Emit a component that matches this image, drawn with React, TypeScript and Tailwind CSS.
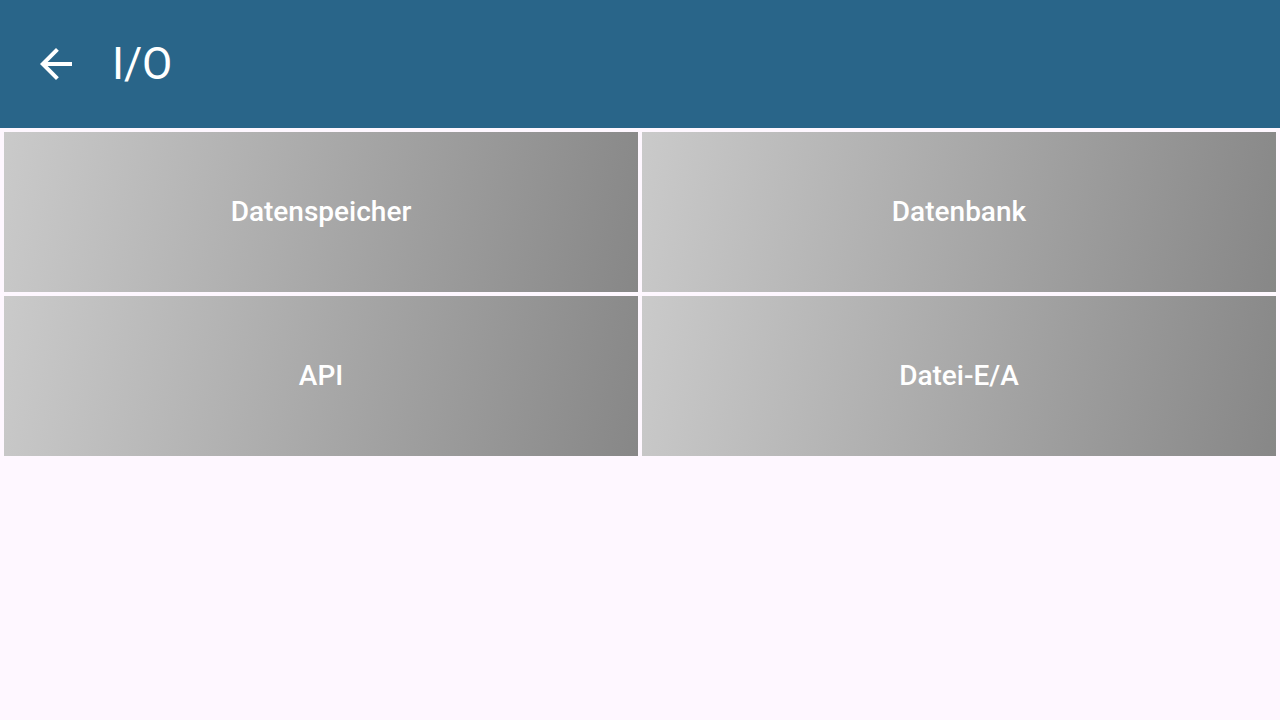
const tiles = ['Datenspeicher', 'Datenbank', 'API', 'Datei-E/A'];

export default function App() {
  return (
    <div className="min-h-[720px] w-full bg-[#fef7ff] font-['Roboto',sans-serif]">
      <header className="flex h-[128px] items-center bg-[#296589] pl-8 text-white">
        <button aria-label="Zurück" className="flex h-12 w-12 items-center justify-center">
          <svg viewBox="0 0 24 24" className="h-12 w-12" fill="currentColor">
            <path d="M20 11H7.83l5.59-5.59L12 4l-8 8 8 8 1.41-1.41L7.83 13H20v-2z" />
          </svg>
        </button>
        <h1 className="ml-[32px] text-[44px] leading-none font-normal">I/O</h1>
      </header>

      <div className="grid grid-cols-2 gap-1 p-1">
        {tiles.map((t) => (
          <div
            key={t}
            className="flex h-[160px] items-center justify-center bg-linear-[100deg] from-[#cacaca] to-[#878787]"
          >
            <span className="text-[28px] font-medium text-white">{t}</span>
          </div>
        ))}
      </div>
    </div>
  );
}
